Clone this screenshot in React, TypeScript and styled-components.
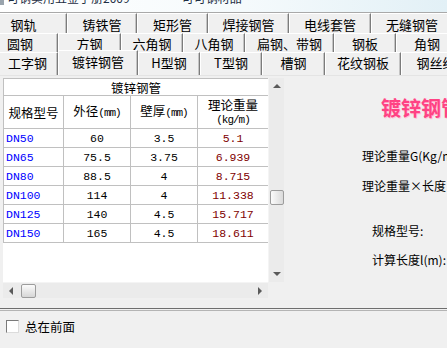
import React from 'react';
import styled, { createGlobalStyle } from 'styled-components';

const GlobalStyle = createGlobalStyle`
  html, body {
    margin: 0;
    padding: 0;
    background: #f0f0f0;
  }
  body {
    font-family: "Noto Sans CJK SC", "DejaVu Sans", sans-serif;
    font-size: 12px;
    color: #000;
  }
`;

const Window = styled.div`
  width: 447px;
  height: 348px;
  overflow: hidden;
  display: flex;
  flex-direction: column;
  background: #f0f0f0;
`;

const TitleBar = styled.div`
  flex: none;
  height: 12px;
  overflow: hidden;
  display: flex;
  gap: 3px;
  background: linear-gradient(to right, #ffffff 0%, #f5fafc 55%, #e2f0f6 100%);
  border-bottom: 1px solid #a9a9a9;
`;

const TitleIcon = styled.div`
  flex: none;
  width: 4px;
  height: 5px;
  background: #9aa4ad;
`;

const TitleText = styled.div`
  margin-top: -8px;
  font-size: 12px;
  line-height: 12px;
  color: #1e2f45;
  white-space: nowrap;
  word-spacing: 18px;
`;

const TabStrip = styled.div`
  flex: none;
  display: flex;
  flex-direction: column;
`;

const TabRow = styled.div<{ $h: number }>`
  display: flex;
  height: ${p => p.$h}px;
  align-items: flex-end;
`;

const Tab = styled.div<{ $w: number; $lead?: number; $active?: boolean; $pad: number }>`
  flex: none;
  box-sizing: border-box;
  position: relative;
  z-index: ${p => (p.$active ? 1 : 0)};
  width: ${p => p.$w}px;
  margin-left: ${p => -(p.$lead || 0)}px;
  height: ${p => (p.$active ? 'calc(100% + 2px)' : '100%')};
  padding-top: ${p => p.$pad}px;
  background: #f0f0f0;
  border-top: 1px solid #ffffff;
  border-left: 1px solid #ffffff;
  border-right: 1px solid #7c7c7c;
  box-shadow: inset -1px 0 0 #c4c4c4;
  font-size: 13px;
  line-height: 13px;
  text-align: center;
  white-space: nowrap;
  overflow: hidden;
`;

const Body = styled.div`
  flex: none;
  height: 231px;
  display: flex;
  border-top: 1px solid #e4e4e4;
  box-sizing: border-box;
`;

const LeftPane = styled.div`
  flex: none;
  padding: 2px 0 0 3px;
`;

const GridFrame = styled.div`
  display: grid;
  grid-template-columns: 265px 16px;
  grid-template-rows: 204px 16px;
`;

const TableArea = styled.div`
  background: #ffffff;
  overflow: hidden;
`;

const Table = styled.table`
  border-collapse: collapse;
  table-layout: fixed;
  width: 265px;
  font-size: 12.5px;
`;

const HeadCell = styled.td<{ $h: number }>`
  border: 1px solid #c0c0c0;
  height: ${p => p.$h}px;
  padding: 0;
  text-align: center;
  line-height: 13px;
  box-sizing: border-box;
  white-space: nowrap;
`;

const Small = styled.span`
  font-family: "Liberation Mono", monospace;
  font-size: 11px;
  letter-spacing: -1px;
`;

const DataCell = styled.td<{ $tone?: 'blue' | 'red'; $left?: boolean }>`
  border: 1px solid #c0c0c0;
  height: 19px;
  padding: 0 0 0 ${p => (p.$left ? 2 : 0)}px;
  box-sizing: border-box;
  text-align: ${p => (p.$left ? 'left' : 'center')};
  font-family: "Liberation Mono", "DejaVu Sans Mono", monospace;
  font-size: 11.5px;
  line-height: 17px;
  color: ${p => (p.$tone === 'blue' ? '#0000ff' : p.$tone === 'red' ? '#800000' : '#000')};
`;

const VScroll = styled.div`
  display: flex;
  flex-direction: column;
  align-items: center;
  background: #ebebeb;
  border-left: 1px solid #f4f4f4;
  box-sizing: border-box;
`;

const HScroll = styled.div`
  display: flex;
  align-items: center;
  background: #ebebeb;
  border-top: 1px solid #f4f4f4;
`;

const Corner = styled.div`
  background: #f0f0f0;
`;

const Track = styled.div<{ $pos: number; $dir: 'v' | 'h' }>`
  flex: 1;
  display: flex;
  flex-direction: ${p => (p.$dir === 'v' ? 'column' : 'row')};
  padding-${p => (p.$dir === 'v' ? 'top' : 'left')}: ${p => p.$pos}px;
`;

const Thumb = styled.div<{ $dir: 'v' | 'h' }>`
  box-sizing: border-box;
  width: ${p => (p.$dir === 'v' ? 14 : 15)}px;
  height: ${p => (p.$dir === 'v' ? 15 : 14)}px;
  border: 1px solid #9c9c9c;
  border-radius: 2px;
  background: ${p =>
    p.$dir === 'v'
      ? 'linear-gradient(to right, #fbfbfb, #dadada)'
      : 'linear-gradient(to bottom, #fbfbfb, #d6d6d6)'};
`;

const Arrow = styled.div<{ $side: 'up' | 'down' | 'left' | 'right' }>`
  flex: none;
  width: 16px;
  height: 16px;
  display: flex;
  align-items: center;
  justify-content: center;
  color: #606060;
`;

const RightPane = styled.div`
  flex: 1;
  display: flex;
  flex-direction: column;
  align-items: flex-start;
  padding-top: 22px;
  overflow: hidden;
  white-space: nowrap;
`;

const BigTitle = styled.div`
  margin-left: 97px;
  font-size: 20px;
  line-height: 20px;
  font-weight: bold;
  color: #ff4384;
  text-shadow: 1px 1px 0 #ffc6d8;
`;

const InfoLine = styled.div<{ $indent: number; $gap: number }>`
  margin-left: ${p => p.$indent}px;
  margin-top: ${p => p.$gap}px;
  font-size: 12px;
  line-height: 12px;
`;

const Divider = styled.div`
  flex: none;
  margin-top: 2px;
  height: 1px;
  border-top: 1px solid #6e6e6e;
  border-bottom: 1px solid #b4b4b4;
`;

const Footer = styled.div`
  flex: 1;
  display: flex;
  align-items: flex-start;
  gap: 6px;
  padding: 9px 0 0 6px;
`;

const CheckBox = styled.div`
  flex: none;
  box-sizing: border-box;
  width: 13px;
  height: 13px;
  background: #fff;
  border: 1px solid #7a7a7a;
  border-right-color: #dcdcdc;
  border-bottom-color: #dcdcdc;
`;

const CheckLabel = styled.span`
  font-size: 12.5px;
  line-height: 13px;
`;

type TabDef = { label: string; w: number; lead?: number; active?: boolean };

const rows: { h: number; pad: number; tabs: TabDef[] }[] = [
  {
    h: 20,
    pad: 4,
    tabs: [
      { label: '钢轨', w: 87, lead: 20 },
      { label: '铸铁管', w: 70 },
      { label: '矩形管', w: 71 },
      { label: '焊接钢管', w: 81 },
      { label: '电线套管', w: 82 },
      { label: '无缝钢管', w: 82 },
    ],
  },
  {
    h: 19,
    pad: 3,
    tabs: [
      { label: '圆钢', w: 76, lead: 18 },
      { label: '方钢', w: 63 },
      { label: '六角钢', w: 62 },
      { label: '八角钢', w: 62 },
      { label: '扁钢、带钢', w: 89 },
      { label: '钢板', w: 62 },
      { label: '角钢', w: 62 },
    ],
  },
  {
    h: 23,
    pad: 3,
    tabs: [
      { label: '工字钢', w: 61, lead: 3 },
      { label: '镀锌钢管', w: 80, active: true },
      { label: 'H型钢', w: 62 },
      { label: 'T型钢', w: 62 },
      { label: '槽钢', w: 63 },
      { label: '花纹钢板', w: 76 },
      { label: '钢丝绳', w: 70 },
    ],
  },
];

const pipes = [
  ['DN50', '60', '3.5', '5.1'],
  ['DN65', '75.5', '3.75', '6.939'],
  ['DN80', '88.5', '4', '8.715'],
  ['DN100', '114', '4', '11.338'],
  ['DN125', '140', '4.5', '15.717'],
  ['DN150', '165', '4.5', '18.611'],
];

const tri: Record<string, string> = {
  up: '0,5 4,1 8,5',
  down: '0,1 4,5 8,1',
  left: '5,0 1,4 5,8',
  right: '1,0 5,4 1,8',
};

function ScrollArrow({ side }: { side: 'up' | 'down' | 'left' | 'right' }) {
  const v = side === 'up' || side === 'down';
  return (
    <Arrow $side={side}>
      <svg width={v ? 8 : 6} height={v ? 6 : 8} viewBox={v ? '0 0 8 6' : '0 0 6 8'}>
        <polygon points={tri[side]} fill="#5a5a5a" />
      </svg>
    </Arrow>
  );
}

function App() {
  return (
    <Window>
      <GlobalStyle />
      <TitleBar>
        <TitleIcon />
        <TitleText>可钢实用五金手册2009 — 可可钢材品</TitleText>
      </TitleBar>

      <TabStrip>
        {rows.map((row, i) => (
          <TabRow key={i} $h={row.h}>
            {row.tabs.map(t => (
              <Tab
                key={t.label}
                $w={t.w}
                $lead={t.lead}
                $active={t.active}
                $pad={t.active ? row.pad + 1 : row.pad}
              >
                {t.label}
              </Tab>
            ))}
          </TabRow>
        ))}
      </TabStrip>

      <Body>
        <LeftPane>
          <GridFrame>
            <TableArea>
              <Table>
                <colgroup>
                  <col style={{ width: 60 }} />
                  <col style={{ width: 67 }} />
                  <col style={{ width: 67 }} />
                  <col style={{ width: 71 }} />
                </colgroup>
                <tbody>
                  <tr>
                    <HeadCell $h={17} colSpan={4}>镀锌钢管</HeadCell>
                  </tr>
                  <tr>
                    <HeadCell $h={33}>规格型号</HeadCell>
                    <HeadCell $h={33}>外径<Small>(mm)</Small></HeadCell>
                    <HeadCell $h={33}>壁厚<Small>(mm)</Small></HeadCell>
                    <HeadCell $h={33}>
                      理论重量
                      <br />
                      <Small>(kg/m)</Small>
                    </HeadCell>
                  </tr>
                  {pipes.map(p => (
                    <tr key={p[0]}>
                      <DataCell $tone="blue" $left>{p[0]}</DataCell>
                      <DataCell>{p[1]}</DataCell>
                      <DataCell>{p[2]}</DataCell>
                      <DataCell $tone="red">{p[3]}</DataCell>
                    </tr>
                  ))}
                </tbody>
              </Table>
            </TableArea>
            <VScroll>
              <ScrollArrow side="up" />
              <Track $dir="v" $pos={96}>
                <Thumb $dir="v" />
              </Track>
              <ScrollArrow side="down" />
            </VScroll>
            <HScroll>
              <ScrollArrow side="left" />
              <Track $dir="h" $pos={2}>
                <Thumb $dir="h" />
              </Track>
              <ScrollArrow side="right" />
            </HScroll>
            <Corner />
          </GridFrame>
        </LeftPane>

        <RightPane>
          <BigTitle>镀锌钢管</BigTitle>
          <InfoLine $indent={78} $gap={32}>理论重量G(Kg/m)=</InfoLine>
          <InfoLine $indent={78} $gap={18}>理论重量×长度</InfoLine>
          <InfoLine $indent={88} $gap={33}>规格型号:</InfoLine>
          <InfoLine $indent={88} $gap={17}>计算长度l(m):</InfoLine>
        </RightPane>
      </Body>

      <Divider />
      <Footer>
        <CheckBox />
        <CheckLabel>总在前面</CheckLabel>
      </Footer>
    </Window>
  );
}

export default App;
